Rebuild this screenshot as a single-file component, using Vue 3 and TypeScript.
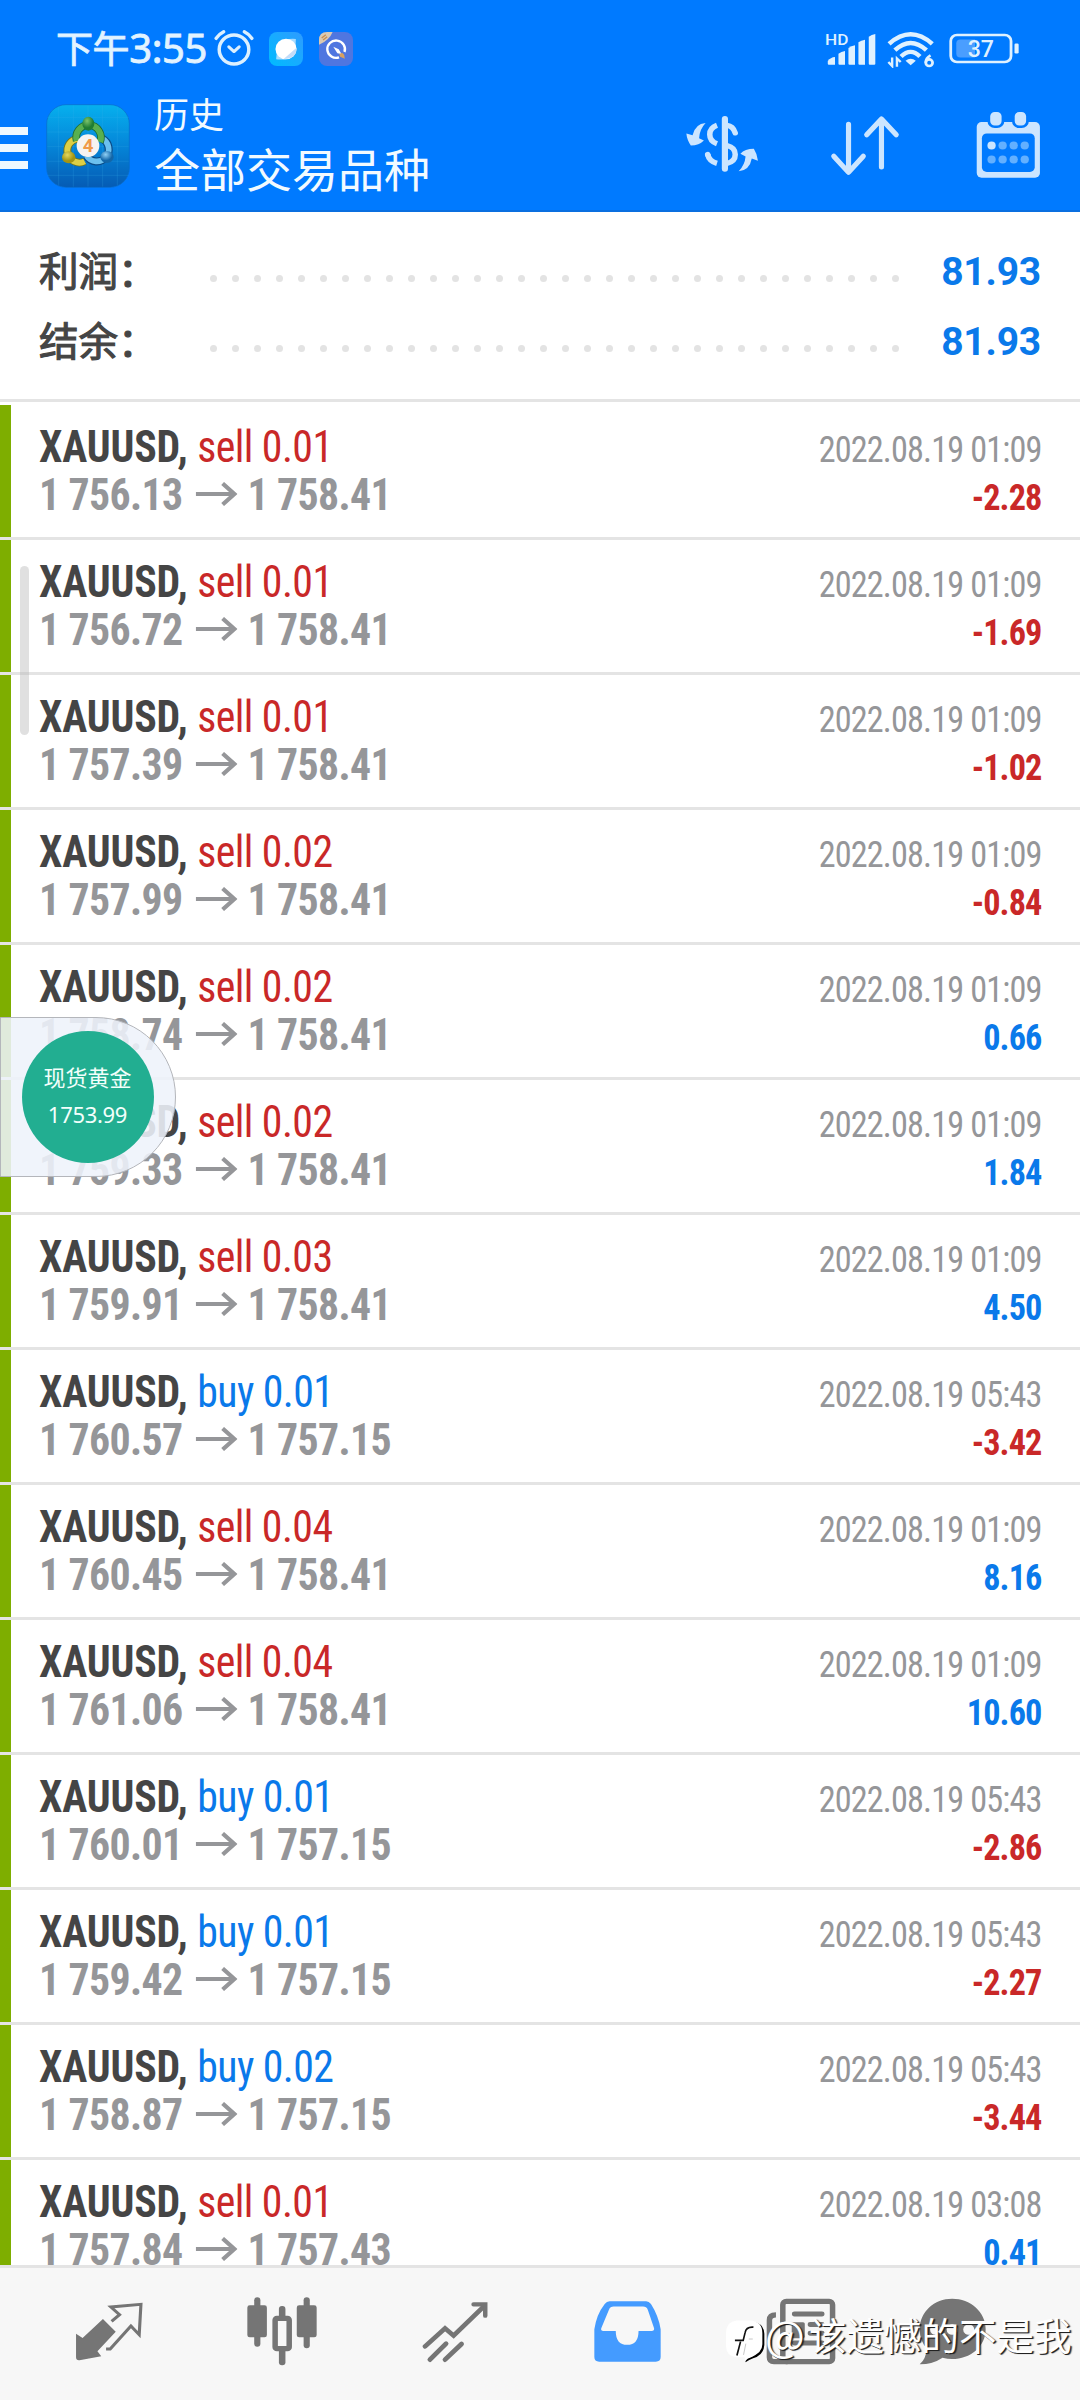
<script setup lang="ts">
interface Deal {
  side: 'sell' | 'buy'
  lots: string
  open: string
  close: string
  time: string
  profit: string
}

const deal = (
  side: Deal['side'],
  lots: string,
  open: string,
  close: string,
  time: string,
  profit: string,
): Deal => ({ side, lots, open: `1 ${open}`, close: `1 ${close}`, time: `2022.08.19 ${time}`, profit })

const deals: Deal[] = [
  deal('sell', '0.01', '756.13', '758.41', '01:09', '-2.28'),
  deal('sell', '0.01', '756.72', '758.41', '01:09', '-1.69'),
  deal('sell', '0.01', '757.39', '758.41', '01:09', '-1.02'),
  deal('sell', '0.02', '757.99', '758.41', '01:09', '-0.84'),
  deal('sell', '0.02', '758.74', '758.41', '01:09', '0.66'),
  deal('sell', '0.02', '759.33', '758.41', '01:09', '1.84'),
  deal('sell', '0.03', '759.91', '758.41', '01:09', '4.50'),
  deal('buy', '0.01', '760.57', '757.15', '05:43', '-3.42'),
  deal('sell', '0.04', '760.45', '758.41', '01:09', '8.16'),
  deal('sell', '0.04', '761.06', '758.41', '01:09', '10.60'),
  deal('buy', '0.01', '760.01', '757.15', '05:43', '-2.86'),
  deal('buy', '0.01', '759.42', '757.15', '05:43', '-2.27'),
  deal('buy', '0.02', '758.87', '757.15', '05:43', '-3.44'),
  deal('sell', '0.01', '757.84', '757.43', '03:08', '0.41'),
]

const summary = [
  { label: '利润：', value: '81.93' },
  { label: '结余：', value: '81.93' },
]

const calendarDots = [1312, 1344, 1376, 1408]
</script>

<template>
  <div class="screen">
    <header class="top">
      <div class="status">
        <span class="clock"><span class="ampm">下午</span>3:55</span>
        <svg class="alarm" viewBox="620 90 122 113" preserveAspectRatio="none">
          <g fill="none" stroke="#dcf0ff" stroke-linecap="round">
            <circle cx="681" cy="151" r="43" stroke-width="10" />
            <path d="M666 143l15 14 15-14" stroke-width="9" stroke-linejoin="round" />
            <path d="M629 118q8-13 22-20M711 98q14 7 22 20" stroke-width="10" />
          </g>
        </svg>
        <svg class="app-a" viewBox="780 96 100 102" preserveAspectRatio="none">
          <defs>
            <linearGradient id="ga" x1="0" y1="1" x2="1" y2="0">
              <stop offset="0" stop-color="#00bcff" />
              <stop offset="1" stop-color="#2f9bff" />
            </linearGradient>
          </defs>
          <rect x="780" y="96" width="100" height="102" rx="24" fill="url(#ga)" />
          <path d="M801 178l2-22 34 20q-20 4-36 2zM859 117l-1 24-30-22q18-4 31-2z" fill="#a9dcff" />
          <ellipse cx="830" cy="147" rx="31" ry="31" fill="#fff" />
          <path d="M861 143q2 32-38 34z" fill="#c3dcf8" />
        </svg>
        <svg class="app-b" viewBox="926 96 100 102" preserveAspectRatio="none">
          <rect x="926" y="96" width="100" height="102" rx="24" fill="#4f76e0" />
          <path d="M926 134v-14q0-24 24-24h16q-10 26-40 38z" fill="#d9c9b4" />
          <path d="M934 114l12-10M938 120l12-10" stroke="#c98e4c" stroke-width="4" />
          <path d="M985 172a26 26 0 1 1 16-16" fill="none" stroke="#fff" stroke-width="7" />
          <path d="M968 140l16 8 8 14-12-2z" fill="#fff" />
          <path d="M986 162l8-4 6 6 2 12-14-6z" fill="#d8a060" />
        </svg>
        <svg class="signal" viewBox="824 93 151 105" preserveAspectRatio="none">
          <text x="827" y="134" class="hd" textLength="68" lengthAdjust="spacingAndGlyphs">HD</text>
          <g fill="#dff1ff">
            <path d="M835 183q8-11 21-12v23h-18q-3 0-3-3z" />
            <path d="M866 161q8-6 19-8v41h-16q-3 0-3-3z" />
            <path d="M895 144q8-6 19-8v58h-16q-3 0-3-3z" />
            <path d="M924 127q8-6 19-8v75h-16q-3 0-3-3z" />
            <path d="M954 110q8-6 19-8v89q0 3-3 3h-13q-3 0-3-3z" />
          </g>
        </svg>
        <svg class="wifi" viewBox="1008 94 140 112" preserveAspectRatio="none">
          <g fill="none" stroke="#dff1ff" stroke-width="13">
            <path d="M1014 133q63-58 126 0" />
            <path d="M1031 152q46-44 92 0" />
            <path d="M1049 171q28-28 55 0" />
          </g>
          <path d="M1062 184q15-12 30 0l-15 14z" fill="#dff1ff" />
          <path d="M1023 174v26l-11-12M1037 202v-25l11 11" fill="none" stroke="#dff1ff" stroke-width="7" />
          <path d="M1135 168q-14 8-14 22" fill="none" stroke="#dff1ff" stroke-width="8" />
          <circle cx="1131" cy="190" r="10" fill="none" stroke="#dff1ff" stroke-width="8" />
        </svg>
        <svg class="battery" viewBox="1187 100 202 94" preserveAspectRatio="none">
          <rect x="1192" y="106" width="174" height="82" rx="18" fill="none" stroke="#dff1ff" stroke-width="8" />
          <path d="M1262 120v54h-42q-12 0-12-12v-30q0-12 12-12z" fill="#4a9eff" />
          <rect x="1376" y="132" width="12" height="30" rx="4" fill="#dff1ff" />
          <text x="1241" y="174" class="pct" textLength="76" lengthAdjust="spacingAndGlyphs">37</text>
        </svg>
      </div>
      <div class="toolbar">
        <div class="burger"><i></i><i></i><i></i></div>
        <svg class="logo" viewBox="48 42 252 252">
          <defs>
            <linearGradient id="lb" x1="0" y1="0" x2="0" y2="1">
              <stop offset="0" stop-color="#06b0ee" />
              <stop offset="0.5" stop-color="#0585d8" />
              <stop offset="1" stop-color="#055bb4" />
            </linearGradient>
            <radialGradient id="lg" cx="0.4" cy="0.3"><stop offset="0" stop-color="#7cc46c" /><stop offset="1" stop-color="#1f7d33" /></radialGradient>
            <radialGradient id="ly" cx="0.4" cy="0.3"><stop offset="0" stop-color="#e6d860" /><stop offset="1" stop-color="#a39413" /></radialGradient>
            <radialGradient id="lc" cx="0.4" cy="0.3"><stop offset="0" stop-color="#8fd0f5" /><stop offset="1" stop-color="#1266a8" /></radialGradient>
          </defs>
          <rect x="50" y="44" width="248" height="248" rx="58" fill="url(#lb)" stroke="#0a6cc8" stroke-width="2" />
          <path d="M86 50v236M130 46v244M174 46v244M218 46v244M262 50v236M52 82h244M52 126h244M52 170h244M52 214h244M52 256h244" stroke="#3cb4ea" stroke-opacity="0.3" stroke-width="2" />
          <g transform="translate(78 60)" fill="none">
            <path d="M66 86A36 36 0 1 0 86 154" stroke="#6f741c" stroke-width="23" />
            <path d="M66 86A36 36 0 1 0 86 154" stroke="#dccf45" stroke-width="18" />
            <path d="M138 86A36 36 0 1 1 92 138" stroke="#0a4a86" stroke-width="24" />
            <path d="M138 86A36 36 0 1 1 92 138" stroke="#6cc0ee" stroke-width="17" />
            <path d="M62 92A37 37 0 1 1 132 96" stroke="#1c6b35" stroke-width="23" />
            <path d="M62 92A37 37 0 1 1 132 96" stroke="#58b050" stroke-width="18" />
          </g>
          <ellipse cx="175" cy="101" rx="18" ry="21" fill="url(#lg)" />
          <ellipse cx="116" cy="202" rx="20" ry="18" fill="url(#ly)" />
          <ellipse cx="231" cy="201" rx="20" ry="18" fill="url(#lc)" />
          <circle cx="174" cy="167" r="34" fill="#f6f3f2" />
          <text x="174" y="187" class="four">4</text>
        </svg>
        <div class="titles">
          <div class="sub">历史</div>
          <div class="main">全部交易品种</div>
        </div>
        <svg class="t-dollar" viewBox="424 345 212 175" preserveAspectRatio="none">
          <path d="M537 357v150" stroke="#cce5ff" stroke-width="18" stroke-linecap="round" />
          <g fill="none" stroke="#cce5ff" stroke-width="16">
            <path d="M514 376q-21 8-21 28t21 28" />
            <path d="M543 376q18 2 24 23" stroke-linecap="round" />
            <path d="M543 437q24 6 24 27t-24 27" />
            <path d="M487 464q4 20 27 27" />
            <path d="M487 464l1 3" stroke-linecap="round" />
          </g>
          <path d="M481 369q-30 2-38 37l-18-5q2 20 13 36q24 0 38-15l-14-7q2-28 19-46z" fill="#cce5ff" />
          <path d="M577 515q32-4 38-39l18 7q-3-22-12-36q-26 0-39 15l15 8q-2 25-20 45z" fill="#cce5ff" />
        </svg>
        <svg class="t-sort" viewBox="842 345 204 185" preserveAspectRatio="none">
          <g fill="none" stroke="#cce5ff" stroke-width="15" stroke-linecap="round" stroke-linejoin="round">
            <path d="M896 373v142M853 468l43 48 43-48" />
            <path d="M992 357v143M949 404l43-47 43 47" />
          </g>
        </svg>
        <svg class="t-cal" viewBox="1264 330 194 206" preserveAspectRatio="none">
          <rect x="1269" y="366" width="183" height="166" rx="14" fill="#cce5ff" />
          <rect x="1284" y="400" width="153" height="115" rx="14" fill="#007aff" />
          <g fill="#cce5ff" stroke="#007aff" stroke-width="8">
            <rect x="1304" y="332" width="41" height="48" rx="17" />
            <rect x="1375" y="332" width="41" height="48" rx="17" />
          </g>
          <g v-for="(x, i) in calendarDots" :key="x">
            <circle :cx="x" cy="436" r="12" :fill="i === 0 ? '#cce5ff' : '#63b0ff'" />
            <circle :cx="x" cy="478" r="12" fill="#63b0ff" />
          </g>
        </svg>
      </div>
    </header>

    <section class="summary">
      <div v-for="s in summary" :key="s.label" class="sum-row">
        <span class="sum-label">{{ s.label }}</span>
        <span class="dots"><i v-for="n in 32" :key="n"></i></span>
        <span class="sum-value">{{ s.value }}</span>
      </div>
    </section>

    <main class="deals">
      <article v-for="(d, i) in deals" :key="i" class="deal">
        <div class="left">
          <div class="line"><b>XAUUSD,</b> <span class="order" :class="d.side">{{ d.side }} {{ d.lots }}</span></div>
          <div class="line prices">
            <span>{{ d.open }}</span>
            <svg class="arrow" viewBox="0 0 42 24" preserveAspectRatio="none"><path d="M0 12h39M27 1.500l11.800 10.500-11.800 10.500" fill="none" stroke="#959699" stroke-width="4.200" /></svg>
            <span>{{ d.close }}</span>
          </div>
        </div>
        <div class="right">
          <div class="time">{{ d.time }}</div>
          <div class="profit" :class="d.profit.startsWith('-') ? 'sell' : 'buy'">{{ d.profit }}</div>
        </div>
      </article>
      <div class="scrollbar"></div>
    </main>

    <nav class="tabs">
      <div class="tab">
        <svg style="width: 68px; height: 61px" viewBox="216 186 197 183" preserveAspectRatio="none">
          <path d="M297 240l37 38-53 59 11 15-63 12q-10 1-10-9v-71l19 13z" fill="#757575" />
          <path d="M322 247l23-20-25-23 87-8-5 91-24-26-60 69h-12" fill="none" stroke="#757575" stroke-width="9" />
        </svg>
      </div>
      <div class="tab">
        <svg style="width: 70px; height: 69px" viewBox="714 173 204 207" preserveAspectRatio="none">
          <g fill="#757575">
            <rect x="735" y="174" width="18" height="148" rx="9" /><rect x="715" y="198" width="57" height="96" rx="7" />
            <rect x="879" y="174" width="18" height="153" rx="9" /><rect x="859" y="198" width="58" height="96" rx="7" />
            <rect x="807" y="200" width="19" height="40" rx="9" /><rect x="807" y="325" width="19" height="53" rx="9" />
          </g>
          <rect x="796" y="237" width="41" height="91" rx="5" fill="#f7f7f7" stroke="#757575" stroke-width="16" />
        </svg>
      </div>
      <div class="tab">
        <svg style="width: 66px; height: 62px" viewBox="1222 180 192 186" preserveAspectRatio="none">
          <g fill="none" stroke="#757575" stroke-width="14" stroke-linecap="round" stroke-linejoin="miter">
            <path d="M1231 316l58-54 25 22 88-88" />
            <path d="M1372 190h34v34" stroke-width="13" />
            <path d="M1245 356l47-48M1289 356l48-47" />
          </g>
        </svg>
      </div>
      <div class="tab">
        <svg style="width: 67px; height: 61px" viewBox="157 181 194 185" preserveAspectRatio="none">
          <path
            d="M202 182h106q8 0 14 8q22 36 28 77v84q0 14-14 14H172q-14 0-14-14v-84q6-45 30-77q6-8 14-8zM214 198q-10 0-14 10l-22 56q-2 8 6 8h36q0 42 33 42t33-42h38q8 0 7-8l-18-56q-4-10-14-10z"
            fill="#449bff" fill-rule="evenodd" />
        </svg>
      </div>
      <div class="tab">
        <svg style="width: 70px; height: 67px" viewBox="656 172 204 202" preserveAspectRatio="none">
          <rect x="705" y="182" width="145" height="182" rx="10" fill="none" stroke="#757575" stroke-width="16" />
          <path d="M685 223q-19 0-19 16v112q0 13 13 13h40" fill="none" stroke="#757575" stroke-width="16" />
          <path d="M739 220h80M785 252h34M785 278h34M739 308h80" stroke="#757575" stroke-width="15" stroke-linecap="round" />
          <rect x="731" y="245" width="38" height="48" rx="5" fill="#757575" />
        </svg>
      </div>
      <div class="tab last">
        <svg style="width: 67px; height: 67px" viewBox="1102 172 194 202" preserveAspectRatio="none">
          <path d="M1198 174c53 0 97 40 97 92s-44 90-97 90q-14 0-28-4q-28 20-66 20q18-16 21-48q-21-22-21-58c0-52 42-92 94-92z" fill="#757575" />
          <g fill="#f7f7f7"><circle cx="1150" cy="267" r="16" /><circle cx="1198" cy="267" r="16" /><circle cx="1246" cy="267" r="16" /></g>
        </svg>
      </div>
    </nav>

    <div class="bubble">
      <div class="disc">
        <span class="name">现货黄金</span>
        <span class="quote">1753.99</span>
      </div>
    </div>

    <div class="mark">
      <svg class="mark-logo" viewBox="136 148 118 132">
        <path d="M170 154h44q37 6 38 38v34q-2 32-34 40-12 4-23 12v-10q20-4 28-12z" fill="#000" />
        <path d="M168 152h44q34 4 34 38v34q0 26-34 38-10 4-19 14v-13h-25q-31-2-32-34v-40q1-34 32-37z" fill="#fff" />
        <path d="M219 172q-22-2-25 16l-6 24h-25M180 216l-11 42" fill="none" stroke="#111" stroke-width="5" />
        <path d="M205 208h12M196 222l-7 34" fill="none" stroke="#aaa" stroke-width="2" />
      </svg>
      <span class="at">@</span><span>该遗憾的不是我</span>
    </div>
  </div>
</template>

<style>
html,
body {
  margin: 0;
  background: #fff;
}
</style>

<style scoped>
.screen {
  position: relative;
  width: 1080px;
  height: 2400px;
  overflow: hidden;
  display: flex;
  flex-direction: column;
  background: #fff;
  font-family: Roboto, 'Noto Sans CJK SC', sans-serif;
}
svg {
  display: block;
  flex: none;
}
.top {
  flex: none;
  height: 210px;
  background: #007aff;
  border-bottom: 2px solid #0a6fe0;
}
.status {
  display: flex;
  align-items: flex-start;
  height: 88px;
  padding-left: 56px;
}
.clock {
  flex: none;
  width: 157px;
  margin-top: 22px;
  font-size: 40px;
  line-height: 52px;
  color: #e2f3ff;
  letter-spacing: -0.4px;
  white-space: nowrap;
  font-family: 'Noto Sans', 'Noto Sans CJK SC', sans-serif;
  -webkit-text-stroke: 0.8px #e2f3ff;
}
.ampm {
  font-size: 37px;
}
.alarm {
  width: 42px;
  height: 38px;
  margin-top: 29px;
}
.app-a {
  width: 34px;
  height: 34px;
  margin: 32px 0 0 14px;
}
.app-b {
  width: 34px;
  height: 34px;
  margin: 32px 0 0 16px;
}
.signal {
  width: 52px;
  height: 35px;
  margin: 31px 0 0 471px;
}
.hd {
  font: 500 46px Roboto, sans-serif;
  fill: #dff1ff;
}
.wifi {
  width: 48px;
  height: 37px;
  margin: 31px 0 0 11px;
}
.battery {
  width: 70px;
  height: 31px;
  margin: 33px 0 0 14px;
}
.pct {
  font: 500 73px Roboto, sans-serif;
  fill: #dff1ff;
}
.toolbar {
  display: flex;
  align-items: flex-start;
  height: 122px;
}
.burger {
  display: flex;
  flex-direction: column;
  gap: 9px;
  width: 28px;
  margin-top: 39px;
}
.burger i {
  height: 8px;
  background: #eef8ff;
}
.logo {
  width: 84px;
  height: 84px;
  margin: 16px 0 0 18px;
}
.four {
  font: 700 56px Roboto, sans-serif;
  fill: #f09a4a;
  text-anchor: middle;
}
.titles {
  width: 531px;
  margin-left: 24px;
  color: #f2faff;
  font-family: 'Noto Sans CJK SC', sans-serif;
  white-space: nowrap;
}
.sub {
  margin-top: 2px;
  font-size: 35px;
  line-height: 46px;
}
.main {
  margin-top: -2px;
  font-size: 46px;
  line-height: 66px;
}
.t-dollar {
  width: 73px;
  height: 58px;
  margin: 27px 0 0 1px;
}
.t-sort {
  width: 70px;
  height: 62px;
  margin: 27px 0 0 71px;
}
.t-cal {
  width: 67px;
  height: 69px;
  margin: 22px 0 0 75px;
}
.summary {
  flex: none;
  box-sizing: border-box;
  height: 190px;
  padding: 24px 39px 0;
  border-bottom: 3px solid #e4e4e4;
}
.sum-row {
  display: flex;
  height: 70px;
}
.sum-label {
  width: 171px;
  font: 400 39.5px/65px 'Noto Sans CJK SC', sans-serif;
  color: #454545;
  -webkit-text-stroke: 1.1px #454545;
  white-space: nowrap;
}
.dots {
  display: flex;
  gap: 15px;
  margin-top: 39px;
}
.dots i {
  width: 7px;
  height: 7px;
  border-radius: 50%;
  background: #e3e3e3;
}
.sum-value {
  margin-left: auto;
  font: 700 39px/72px Roboto, sans-serif;
  letter-spacing: -0.2px;
  color: #0a79ea;
}
.deals {
  position: relative;
  flex: none;
  height: 1860px;
  margin-top: 3px;
  overflow: hidden;
  font-family: 'Roboto Condensed', Roboto, sans-serif;
  font-stretch: 75%;
}
.deal {
  display: flex;
  justify-content: space-between;
  box-sizing: border-box;
  height: 135px;
  padding: 18px 38px 0 39px;
  border-bottom: 3px solid #e4e4e4;
  background: linear-gradient(#7eae00, #7eae00) left / 11px 100% no-repeat;
}
.left {
  transform: scaleX(0.95);
  transform-origin: left;
}
.line {
  height: 48px;
  font-size: 44px;
  line-height: 48px;
  white-space: nowrap;
}
.line b {
  color: #454545;
  letter-spacing: -0.15px;
}
.order {
  letter-spacing: -0.6px;
}
.prices {
  display: flex;
  align-items: center;
  font-weight: 700;
  letter-spacing: -0.65px;
  color: #959699;
}
.arrow {
  width: 44px;
  height: 24px;
  margin: 0 10.5px 2px 13.7px;
}
.right {
  padding-top: 3px;
  text-align: right;
  font-size: 36px;
  line-height: 48px;
  letter-spacing: -0.9px;
  transform: scaleX(0.95);
  transform-origin: right;
}
.time {
  color: #959699;
}
.profit {
  font-weight: 700;
}
.sell {
  color: #c92828;
}
.buy {
  color: #0a79ea;
}
.scrollbar {
  position: absolute;
  left: 20px;
  top: 161px;
  width: 9px;
  height: 169px;
  border-radius: 5px;
  background: rgba(180, 180, 180, 0.42);
}
.tabs {
  flex: none;
  display: flex;
  box-sizing: border-box;
  height: 135px;
  padding: 0 0 0 22px;
  border-top: 3px solid #e4e4e4;
  background: #f7f7f7;
}
.tab {
  display: flex;
  justify-content: center;
  align-items: center;
  width: 173px;
  height: 127px;
}
.tab.last {
  width: 131px;
}
.bubble {
  position: absolute;
  left: 0;
  top: 1017px;
  box-sizing: border-box;
  width: 176px;
  height: 160px;
  padding: 13px 0 0 21px;
  border: 1px solid #b4b6bb;
  border-radius: 0 80px 80px 0;
  background: rgba(238, 243, 250, 0.88);
}
.disc {
  display: flex;
  flex-direction: column;
  align-items: center;
  box-sizing: border-box;
  width: 132px;
  height: 132px;
  padding-top: 27px;
  border-radius: 50%;
  background: #22ae91;
  color: #f2fffb;
  font: 22px/36px 'Noto Sans CJK SC', sans-serif;
}
.name {
  margin-left: -1px;
}
.quote {
  margin: 2px 0 0 -1px;
  font-family: 'Noto Sans', sans-serif;
  letter-spacing: -0.3px;
}
.mark {
  position: absolute;
  left: 726px;
  top: 2306px;
  display: flex;
  align-items: flex-start;
  font: 37.5px/56px 'Noto Sans CJK SC', sans-serif;
  color: #fff;
  text-shadow: 1px 1px 0 #222, 2px 1px 1px rgba(0, 0, 0, 0.6);
  white-space: nowrap;
}
.mark-logo {
  width: 39px;
  height: 44px;
  margin-top: 13px;
}
.at {
  width: 44px;
  font-size: 42px;
}
</style>
